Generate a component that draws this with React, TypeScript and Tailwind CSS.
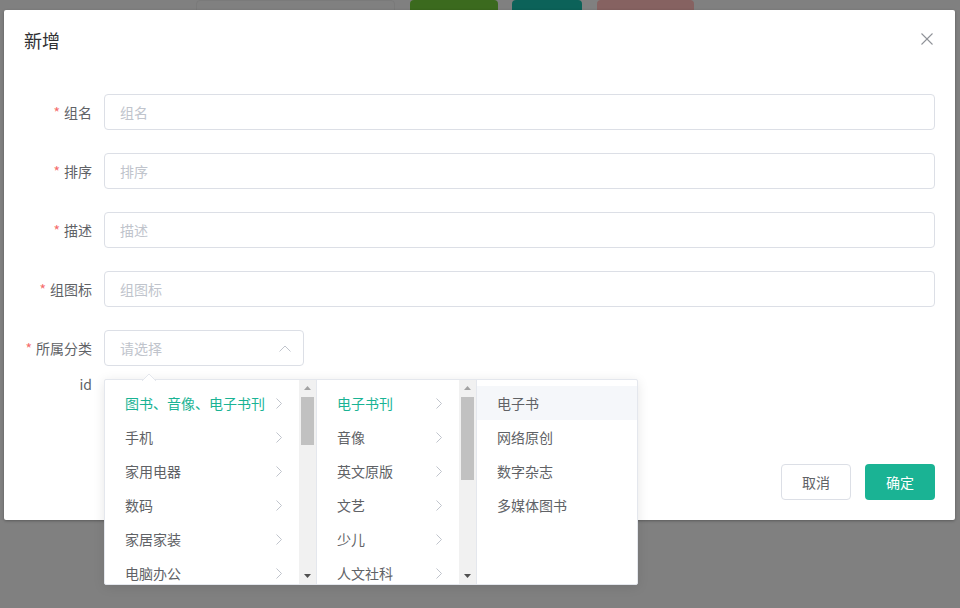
import React from "react";

const FONT = { fontFamily: '"Noto Sans CJK SC", "Noto Sans", sans-serif' };

function Chevron({ className = "" }: { className?: string }) {
  return (
    <svg width="8" height="13" viewBox="0 0 8 13" className={className} fill="none">
      <polyline points="1.5,1.5 6.5,6.5 1.5,11.5" stroke="#c0c4cc" strokeWidth="1" />
    </svg>
  );
}

function FormRow({ label, placeholder }: { label: string; placeholder: string }) {
  return (
    <div className="flex items-center h-[36px]">
      <div className="w-[100px] pr-[12px] text-right text-[14px] text-[#606266] shrink-0">
        <span className="text-[#f56c6c] mr-[4px]">*</span>
        {label}
      </div>
      <div className="flex-1 h-[36px] border border-[#dcdfe6] rounded-[4px] flex items-center pl-[15px] text-[14px] text-[#c0c4cc]">
        {placeholder}
      </div>
    </div>
  );
}

function ScrollBar({ thumbTop, thumbHeight }: { thumbTop: number; thumbHeight: number }) {
  return (
    <div className="relative w-[17px] h-full bg-[#f1f1f1] shrink-0">
      <div className="flex justify-center pt-[6px]">
        <svg width="7" height="4" viewBox="0 0 7 4">
          <polygon points="3.5,0 7,4 0,4" fill="#a3a3a3" />
        </svg>
      </div>
      <div
        className="absolute left-[2px] w-[13px] bg-[#c1c1c1]"
        style={{ top: thumbTop, height: thumbHeight }}
      />
      <div className="absolute bottom-[6px] left-0 w-full flex justify-center">
        <svg width="7" height="4" viewBox="0 0 7 4">
          <polygon points="0,0 7,0 3.5,4" fill="#505050" />
        </svg>
      </div>
    </div>
  );
}

function MenuItem({ text, active, arrow }: { text: string; active?: boolean; arrow?: boolean }) {
  return (
    <div className="relative h-[34px] flex items-center pl-[20px] pr-[30px] text-[14px] shrink-0">
      <span className={active ? "text-[#1ab394]" : "text-[#606266]"}>{text}</span>
      {arrow && (
        <span className="absolute right-[16px] top-[11px] flex">
          <Chevron />
        </span>
      )}
    </div>
  );
}

export default function App() {
  const col1 = ["图书、音像、电子书刊", "手机", "家用电器", "数码", "家居家装", "电脑办公"];
  const col2 = ["电子书刊", "音像", "英文原版", "文艺", "少儿", "人文社科"];
  const col3 = ["电子书", "网络原创", "数字杂志", "多媒体图书"];

  return (
    <div className="relative w-[960px] h-[608px] bg-[#808080] overflow-hidden" style={FONT}>
      {/* background page, dimmed by overlay */}
      <div className="flex items-start h-[12px] pl-[196px]">
        <div className="w-[199px] h-[14px] border border-[#7a7a7a] rounded-[4px] bg-[#808080]" />
        <div className="ml-[15px] w-[88px] h-[14px] rounded-[4px] bg-[#3b6a1e]" />
        <div className="ml-[14px] w-[70px] h-[14px] rounded-[4px] bg-[#0c6259]" />
        <div className="ml-[15px] w-[97px] h-[14px] rounded-[4px] bg-[#866261]" />
      </div>

      {/* dialog */}
      <div className="absolute left-[4px] top-[10px] w-[951px] h-[510px] bg-white rounded-[2px] flex flex-col shadow-[0_1px_3px_rgba(0,0,0,0.3)]">
        <div className="flex items-center justify-between pt-[18px] px-[20px] pb-[10px]">
          <span className="text-[18px] leading-[24px] text-[#303133]">新增</span>
          <svg width="12" height="12" viewBox="0 0 12 12" className="mr-[2px] -mt-[2px]">
            <line x1="0.5" y1="0.5" x2="11.5" y2="11.5" stroke="#909399" strokeWidth="1.1" />
            <line x1="11.5" y1="0.5" x2="0.5" y2="11.5" stroke="#909399" strokeWidth="1.1" />
          </svg>
        </div>

        <div className="pt-[32px] pr-[20px] flex flex-col gap-[23px]">
          <FormRow label="组名" placeholder="组名" />
          <FormRow label="排序" placeholder="排序" />
          <FormRow label="描述" placeholder="描述" />
          <FormRow label="组图标" placeholder="组图标" />
          <div className="flex flex-col">
            <div className="flex items-center h-[36px]">
              <div className="w-[100px] pr-[12px] text-right text-[14px] text-[#606266] shrink-0">
                <span className="text-[#f56c6c] mr-[4px]">*</span>
                所属分类
              </div>
              <div className="relative w-[200px] h-[36px] border border-[#dcdfe6] rounded-[4px] flex items-center pl-[15px] text-[14px] text-[#c0c4cc]">
                请选择
                <svg width="12" height="7" viewBox="0 0 12 7" className="absolute right-[12px] top-[14px]" fill="none">
                  <polyline points="0.5,6.5 6,1 11.5,6.5" stroke="#c0c4cc" strokeWidth="1" />
                </svg>
              </div>
            </div>
            <div className="flex items-center h-[36px]">
              <div className="w-[100px] pr-[12px] text-right text-[14px] text-[#606266] shrink-0">id</div>
            </div>
          </div>
        </div>

        <div className="mt-auto flex justify-end gap-[14px] pr-[20px] pb-[20px]">
          <div className="w-[70px] h-[36px] border border-[#dcdfe6] rounded-[4px] flex items-center justify-center text-[14px] text-[#606266] bg-white">
            取消
          </div>
          <div className="w-[70px] h-[36px] rounded-[4px] flex items-center justify-center text-[14px] text-white bg-[#1ab394]">
            确定
          </div>
        </div>
      </div>

      {/* cascader dropdown */}
      <div className="absolute left-[104px] top-[379px] w-[534px] h-[206px] bg-white border border-[#e4e7ed] rounded-[2px] shadow-[0_2px_12px_rgba(0,0,0,0.1)] flex">
        <svg width="14" height="8" viewBox="0 0 14 8" className="absolute left-[37px] top-[-7px]">
          <polygon points="0,8 7,1 14,8" fill="#ffffff" />
          <polyline points="0,8 7,1 14,8" fill="none" stroke="#e4e7ed" strokeWidth="1" />
        </svg>
        <div className="flex w-[212px] h-full border-r border-[#e4e7ed]">
          <div className="flex-1 flex flex-col pt-[6px] overflow-hidden">
            {col1.map((t, i) => (
              <MenuItem key={t} text={t} active={i === 0} arrow />
            ))}
          </div>
          <ScrollBar thumbTop={17} thumbHeight={48} />
        </div>
        <div className="flex w-[160px] h-full border-r border-[#e4e7ed]">
          <div className="flex-1 flex flex-col pt-[6px] overflow-hidden">
            {col2.map((t, i) => (
              <MenuItem key={t} text={t} active={i === 0} arrow />
            ))}
          </div>
          <ScrollBar thumbTop={17} thumbHeight={83} />
        </div>
        <div className="flex-1 flex flex-col pt-[6px]">
          {col3.map((t, i) => (
            <div
              key={t}
              className={`h-[34px] flex items-center pl-[20px] text-[14px] text-[#606266] ${i === 0 ? "bg-[#f5f7fa]" : ""}`}
            >
              {t}
            </div>
          ))}
        </div>
      </div>
    </div>
  );
}
